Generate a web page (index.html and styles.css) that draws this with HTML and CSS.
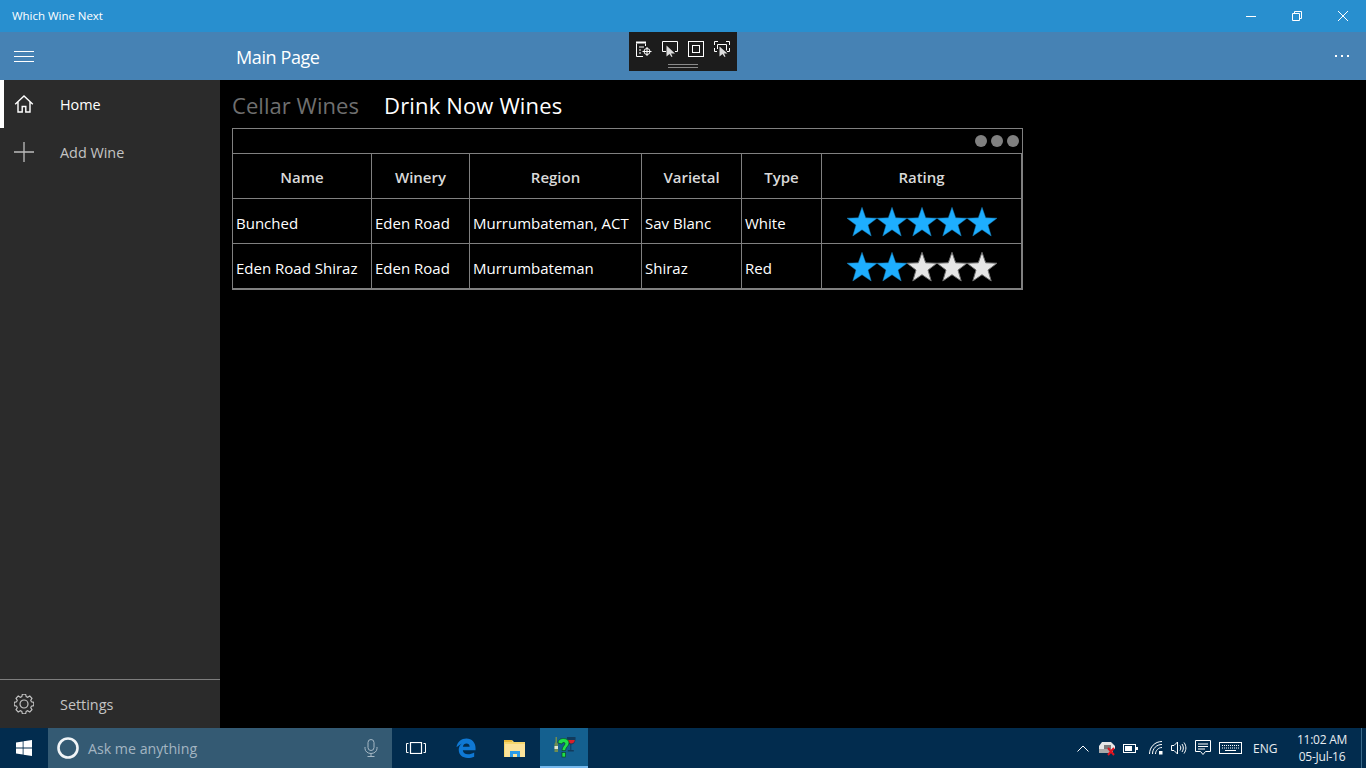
FILE: index.html
```html
<!DOCTYPE html>
<html lang="en">
<head>
<meta charset="utf-8">
<title>Which Wine Next</title>
<link rel="stylesheet" href="styles.css">
</head>
<body>
<svg class="defs" width="0" height="0" aria-hidden="true">
  <defs>
    <polygon id="star" points="15,0.300 18.700,10.800 30,11.200 21,18.100 24.200,29 15,22.700 5.800,29 9,18.100 0,11.200 11.300,10.800"/>
  </defs>
</svg>
<div class="app">
  <header class="titlebar">
    <span class="app-title">Which Wine Next</span>
    <div class="window-controls">
      <span class="wc"><svg width="10" height="10" viewBox="0 0 10 10"><path d="M0 5.5h10" stroke="#fff" fill="none"/></svg></span>
      <span class="wc"><svg width="10" height="10" viewBox="0 0 10 10"><path d="M0.5 2.5h7v7h-7zM2.5 2.5V0.5h7v7H7.5" stroke="#fff" fill="none"/></svg></span>
      <span class="wc"><svg width="10" height="10" viewBox="0 0 10 10"><path d="M0 0l10 10M10 0L0 10" stroke="#fff" fill="none"/></svg></span>
    </div>
  </header>
  <div class="appbar">
    <button class="hamburger" aria-label="Menu"><svg width="20" height="12" viewBox="0 0 20 12"><path d="M0 1.5h20M0 6.5h20M0 11.5h20" stroke="#fff" fill="none"/></svg></button>
    <h1 class="page-title">Main Page</h1>
    <span class="more">
      <i></i><i></i><i></i>
    </span>
  </div>
  <div class="debug-toolbar">
    <div class="debug-icons">
      <svg width="16" height="16" viewBox="0 0 16 16" fill="none" stroke="#fff"><path d="M0.500 2.500V15.500H7M9.500 2.500V5"/><path d="M0 1.500h10" stroke-width="2"/><path d="M3 6h5M3 9h2M3 12h2"/><circle cx="11" cy="10.500" r="3"/><path d="M11 6v9M6.500 10.500h9"/></svg>
      <svg width="16" height="16" viewBox="0 0 16 16"><path d="M4 10.500H0.500V0.500h15v10H13" fill="none" stroke="#fff"/><path d="M4.500 4.500v11l3-2.500 2 3 1-.5-1.500-3h4z" fill="#ddd"/></svg>
      <svg width="16" height="16" viewBox="0 0 16 16" fill="none" stroke="#fff"><rect x="0.500" y="0.500" width="15" height="15"/><rect x="4.500" y="4.500" width="7" height="7"/></svg>
      <svg width="16" height="16" viewBox="0 0 16 16"><path d="M0.500 4V0.500H4M12 0.500h3.500V4M0.500 7v3.500H3M15.500 7v3.500H13" fill="none" stroke="#fff"/><path d="M3.500 8V3.500h9v6" fill="none" stroke="#fff"/><path d="M5.500 5.500v10l3-2.500 2 3 1-.5-1.500-3h3.500z" fill="#ddd"/></svg>
    </div>
    <div class="grip"></div>
  </div>
  <div class="body">
    <nav class="sidebar">
      <div class="nav-top">
        <a class="nav-item active">
          <span class="nav-icon"><svg width="20" height="20" viewBox="0 0 20 20" fill="none" stroke="#fff" stroke-width="1.400"><path d="M1.200 10.300L10 2l8.800 8.300M4 8v10h4.200v-5.500h3.600V18H16V8"/></svg></span>
          <span>Home</span>
        </a>
        <a class="nav-item dim">
          <span class="nav-icon"><svg width="20" height="20" viewBox="0 0 20 20"><path d="M0 10h20M10 0v20" stroke="#bdbdbd" stroke-width="1.300" fill="none"/></svg></span>
          <span>Add Wine</span>
        </a>
      </div>
      <a class="nav-item dim settings">
        <span class="nav-icon"><svg width="20" height="20" viewBox="0 0 20 20" fill="none" stroke="#c4c4c4" stroke-width="1.200"><circle cx="10" cy="10" r="4"/><path d="M8.300 0.700h3.400l.6 2.500 1.500.7 2.300-1.300 2.300 2.400-1.300 2.200.7 1.500 2.500.6v3.400l-2.500.6-.7 1.500 1.300 2.200-2.300 2.400-2.300-1.300-1.500.7-.6 2.500H8.300l-.6-2.500-1.500-.7-2.300 1.300-2.300-2.400 1.300-2.200-.7-1.500-2.500-.6V9.300l2.500-.6.7-1.500-1.300-2.200 2.300-2.400 2.300 1.300 1.500-.7z" transform="translate(.5 -.45) scale(.95)"/></svg></span>
        <span>Settings</span>
      </a>
    </nav>
    <main class="content">
      <div class="pivot">
        <span class="pivot-tab off">Cellar Wines</span>
        <span class="pivot-tab">Drink Now Wines</span>
      </div>
      <section class="wine-table">
        <div class="table-tools"><i></i><i></i><i></i></div>
        <div class="grid">
          <div class="cell head">Name</div>
          <div class="cell head">Winery</div>
          <div class="cell head">Region</div>
          <div class="cell head">Varietal</div>
          <div class="cell head">Type</div>
          <div class="cell head">Rating</div>

          <div class="cell">Bunched</div>
          <div class="cell">Eden Road</div>
          <div class="cell">Murrumbateman, ACT</div>
          <div class="cell">Sav Blanc</div>
          <div class="cell">White</div>
          <div class="cell stars">
            <svg class="star on" viewBox="0 0 30 30"><use href="#star"/></svg>
            <svg class="star on" viewBox="0 0 30 30"><use href="#star"/></svg>
            <svg class="star on" viewBox="0 0 30 30"><use href="#star"/></svg>
            <svg class="star on" viewBox="0 0 30 30"><use href="#star"/></svg>
            <svg class="star on" viewBox="0 0 30 30"><use href="#star"/></svg>
          </div>

          <div class="cell">Eden Road Shiraz</div>
          <div class="cell">Eden Road</div>
          <div class="cell">Murrumbateman</div>
          <div class="cell">Shiraz</div>
          <div class="cell">Red</div>
          <div class="cell stars">
            <svg class="star on" viewBox="0 0 30 30"><use href="#star"/></svg>
            <svg class="star on" viewBox="0 0 30 30"><use href="#star"/></svg>
            <svg class="star" viewBox="0 0 30 30"><use href="#star"/></svg>
            <svg class="star" viewBox="0 0 30 30"><use href="#star"/></svg>
            <svg class="star" viewBox="0 0 30 30"><use href="#star"/></svg>
          </div>
        </div>
      </section>
    </main>
  </div>
  <footer class="taskbar">
    <span class="tb-start"><svg width="16" height="16" viewBox="0 0 16 16" fill="#fff"><path d="M0 2.400L6.700 1.400V7.600H0zM7.500 1.300L16 0V7.600H7.500zM0 8.400H6.700V14.600L0 13.600zM7.500 8.400H16V16L7.500 14.700z"/></svg></span>
    <div class="tb-search">
      <svg class="cortana" width="22" height="22" viewBox="0 0 22 22"><circle cx="11" cy="11" r="9.500" fill="none" stroke="#f0f4f7" stroke-width="2.600"/></svg>
      <span class="search-text">Ask me anything</span>
      <svg class="mic" width="14" height="18" viewBox="0 0 14 18" fill="none" stroke="#a5b8c5"><rect x="4" y="0.500" width="6" height="11" rx="3"/><path d="M1 8v1.500a6 5 0 0 0 12 0V8M7 14.500v3M3.500 17.500h7"/></svg>
    </div>
    <span class="tb-btn"><svg width="20" height="12" viewBox="0 0 20 12" fill="none" stroke="#fff"><rect x="4.500" y="0.500" width="11" height="11" stroke-width="1.200"/><path d="M2.500 1.500H0.500v9h2M17.500 1.500h2v9h-2"/></svg></span>
    <span class="tb-btn edge"><svg width="20" height="20" viewBox="0 0 22 22"><path fill-rule="evenodd" d="M0.500 10C1.500 4 6 0.500 11.500 0.500C17.500 0.500 21.500 5 21.500 11V13.500H7.500C7.800 16.500 10 18 13 18C15.500 18 18 17.300 20 16V20.500C18 21.500 15.500 22 13 22C7 22 3 18.500 3 13C3 10 4.200 7.700 6.500 6C4 7.500 2 9 0.500 10zM7.600 9.500H15C15 7.300 13.500 6 11.500 6C9.500 6 8 7.300 7.600 9.500z" fill="#0f78d4"/></svg></span>
    <span class="tb-btn folder"><svg width="22" height="18" viewBox="0 0 22 18"><path d="M0 1h8l2 2h11v15H0z" fill="#f5d76e"/><path d="M0 1h8v2H0z" fill="#e8b93c"/><path d="M1 5h20v13H1z" fill="#fbe39a"/><path d="M6 18v-6h10v6h-3v-3H9v3z" fill="#2b9be8"/></svg></span>
    <span class="tb-btn running"><svg width="22" height="21" viewBox="0 0 22 21"><path d="M1.500 0h1.500v5l1 2v8H.5V7l1-2z" fill="#6f8d52"/><path d="M.5 9h3.500v3H.5z" fill="#dfe6d0"/><path d="M13 0h8.500c.4 4-.8 7-4.200 7.500V13h2.500v1.500h-6V13h2.500V7.500C13.800 7 12.600 4 13 0z" fill="#123a5c"/><path d="M13.800 3h7c-.2 2-1.400 3.500-3.500 3.500S14 5 13.800 3z" fill="#d8202a"/><path d="M4 6C4 2.500 7 1.500 9.500 1.500C13 1.500 15 3.500 15 6C15 9 11.500 10 11.500 13.500H8C8 9.500 11 8.500 11 6.500C11 5 8 5 8 7z" fill="#1fe04a" stroke="#0a3a14" stroke-width=".6"/><rect x="8" y="15.500" width="3.500" height="4.500" fill="#1fe04a" stroke="#0a3a14" stroke-width=".6"/></svg></span>
    <div class="tray">
      <span class="tray-icon chevron"><svg width="12" height="7" viewBox="0 0 12 7" fill="none" stroke="#fff"><path d="M0.500 6.500L6 1l5.500 5.500"/></svg></span>
      <span class="tray-icon net"><svg width="18" height="15" viewBox="0 0 18 15"><path d="M1 5l3-4h9l4 4v3H1z" fill="#e7e7e7"/><path d="M1 8h14v4H1z" fill="#a8a8a8"/><path d="M6 4h7v4H6z" fill="#7b7b7b"/><path d="M10 7l6 7M16 7l-6 7" stroke="#e1121f" stroke-width="2"/></svg></span>
      <span class="tray-icon batt"><svg width="15" height="9" viewBox="0 0 15 9" fill="none" stroke="#fff"><rect x="0.500" y="0.500" width="12" height="8"/><rect x="2" y="2" width="7" height="5" fill="#fff" stroke="none"/><path d="M14 3v3" stroke-width="2"/></svg></span>
      <span class="tray-icon wifi"><svg width="14" height="14" viewBox="0 0 14 14" fill="none" stroke="#fff"><path d="M0.500 13C0.500 6 6 0.500 13 0.500M3.500 13c0-5.500 4-9.500 9.500-9.500M6.500 13c0-3.500 3-6.500 6.500-6.500"/><rect x="10" y="10" width="3.500" height="3.500" fill="#fff" stroke="none"/></svg></span>
      <span class="tray-icon vol"><svg width="16" height="14" viewBox="0 0 16 14" fill="none" stroke="#fff"><path d="M0.500 4.500h2.500l3.500-3.500v12l-3.500-3.500H0.500z"/><path d="M9 4.500c1 1.500 1 3.500 0 5M11 3c1.800 2.500 1.800 5.500 0 8M13 1.500c2.500 3.500 2.500 7.500 0 11"/></svg></span>
      <span class="tray-icon note"><svg width="16" height="16" viewBox="0 0 16 16" fill="none" stroke="#fff"><path d="M0.500 0.500h15v11h-5l-2.500 3-2.500-3h-5z"/><path d="M3 4h10M3 6.500h10M3 9h7"/></svg></span>
      <span class="tray-icon keys"><svg width="23" height="12" viewBox="0 0 23 12" fill="none" stroke="#fff"><rect x="0.500" y="0.500" width="22" height="11"/><path d="M3 3.500h17M3 6h17" stroke-dasharray="1 1"/><path d="M6 8.500h11"/></svg></span>
      <span class="tray-lang">ENG</span>
      <span class="clock"><span>11:02 AM</span><span>05-Jul-16</span></span>
      <span class="show-desktop"></span>
    </div>
  </footer>
</div>
</body>
</html>
```
FILE: styles.css
```css
* { box-sizing: border-box; }
html, body { margin: 0; padding: 0; height: 100%; background: #000; }
body { font-family: "Open Sans", "Noto Sans", sans-serif; color: #fff; overflow: hidden; }
.defs { display: block; height: 0; }
.app { width: 1366px; height: 768px; display: flex; flex-direction: column; position: relative; }

.titlebar { height: 32px; flex: none; background: #288fcf; display: flex; align-items: center; justify-content: space-between; padding-left: 12px; }
.app-title { font-size: 11.5px; letter-spacing: -0.03px; padding-bottom: 2px; }
.window-controls { display: flex; height: 32px; }
.wc { width: 46px; display: flex; align-items: center; justify-content: center; }

.appbar { height: 48px; flex: none; background: #4682b4; display: flex; align-items: center; }
.hamburger { width: 48px; height: 48px; border: 0; background: none; padding: 0; display: flex; align-items: center; justify-content: center; }
.page-title { font-size: 18px; font-weight: 400; margin: 2px 0 0 188px; letter-spacing: -0.4px; }
.more { margin-left: auto; width: 48px; display: flex; justify-content: center; gap: 4px; }
.more i { width: 2px; height: 2px; background: #fff; display: block; }

.debug-toolbar { position: absolute; left: 629px; top: 32px; width: 108px; height: 39px; background: #1c1c1c; display: flex; flex-direction: column; align-items: center; padding-top: 9px; }
.debug-icons { display: flex; gap: 10px; height: 16px; }
.grip { width: 30px; height: 4px; margin-top: 7px; border-top: 1px solid #8a8a8a; border-bottom: 1px solid #8a8a8a; }

.body { flex: 1; display: flex; min-height: 0; }
.sidebar { width: 220px; flex: none; background: #2b2b2b; display: flex; flex-direction: column; justify-content: space-between; }
.nav-item { height: 48px; display: flex; align-items: center; font-size: 14.4px; padding-left: 4px; }
.nav-item.active { box-shadow: inset 4px 0 0 #fff; }
.nav-item.dim { color: #c4c4c4; }
.nav-icon { width: 56px; padding-left: 10px; display: flex; align-items: center; }
.settings { border-top: 1px solid #7e7e7e; height: 49px; }

.content { flex: 1; background: #000; padding-left: 12px; display: flex; flex-direction: column; min-width: 0; }
.pivot { height: 48px; padding-top: 2px; display: flex; gap: 25px; align-items: center; font-size: 22px; }
.pivot-tab { letter-spacing: 0.15px; }
.pivot-tab.off { color: #6f6f6f; letter-spacing: 0.05px; }

.wine-table { width: 791px; height: 162px; border: 1px solid #808080; }
.table-tools { height: 25px; display: flex; justify-content: flex-end; align-items: center; gap: 4px; padding-right: 3px; border-bottom: 1px solid #808080; }
.table-tools i { width: 12px; height: 12px; border-radius: 50%; background: #808080; display: block; }
.grid { display: grid; grid-template-columns: 139px 98px 172px 100px 80px 200px; grid-auto-rows: 45px; }
.cell { border-right: 1px solid #808080; border-bottom: 1px solid #808080; display: flex; align-items: center; padding: 3px 0 0 3px; font-size: 15px; white-space: nowrap; }
.cell.head { justify-content: center; padding: 2px 0 0; font-weight: 600; color: #d9d9d9; }
.cell.stars { justify-content: center; padding: 2px 0 0; }
.star { width: 30px; height: 30px; display: block; fill: #e6e6e6; stroke: #6d6d6d; stroke-width: 1; overflow: visible; }
.star.on { fill: #1eaeff; stroke: #157bb5; stroke-width: .5; }

.taskbar { height: 40px; flex: none; background: #022c4e; display: flex; align-items: stretch; }
.tb-start { width: 48px; display: flex; align-items: center; justify-content: center; }
.tb-search { width: 344px; background: #345a73; display: flex; align-items: center; padding: 0 14px 0 9px; font-size: 14.2px; color: #a3b5c2; }
.search-text { margin-left: 9px; }
.mic { margin-left: auto; }
.tb-btn { width: 48px; display: flex; align-items: center; justify-content: center; }
.tb-btn.edge { padding-left: 4px; }
.tb-btn.folder { width: 52px; padding-left: 2px; }
.tb-btn.running { background: #14608f; border-bottom: 2px solid #76b9ed; padding-left: 2px; }
.tray { margin-left: auto; display: flex; align-items: center; }
.tray-icon { display: flex; align-items: center; justify-content: center; }
.chevron { width: 18px; margin-right: 6px; }
.net { width: 18px; margin-right: 6px; }
.batt { width: 17px; margin-right: 10px; }
.wifi { width: 14px; margin-right: 8px; }
.vol { width: 16px; margin-right: 8px; }
.note { width: 16px; margin-right: 8px; }
.keys { width: 23px; margin-right: 11px; }
.tray-lang { font-size: 12px; width: 29px; color: #e8edf1; }
.clock { width: 80px; display: flex; flex-direction: column; align-items: center; font-size: 12px; line-height: 17px; color: #e8edf1; letter-spacing: -0.25px; }
.show-desktop { width: 5px; height: 40px; border-left: 1px solid #3a6a8a; margin-left: -1px; }
```
